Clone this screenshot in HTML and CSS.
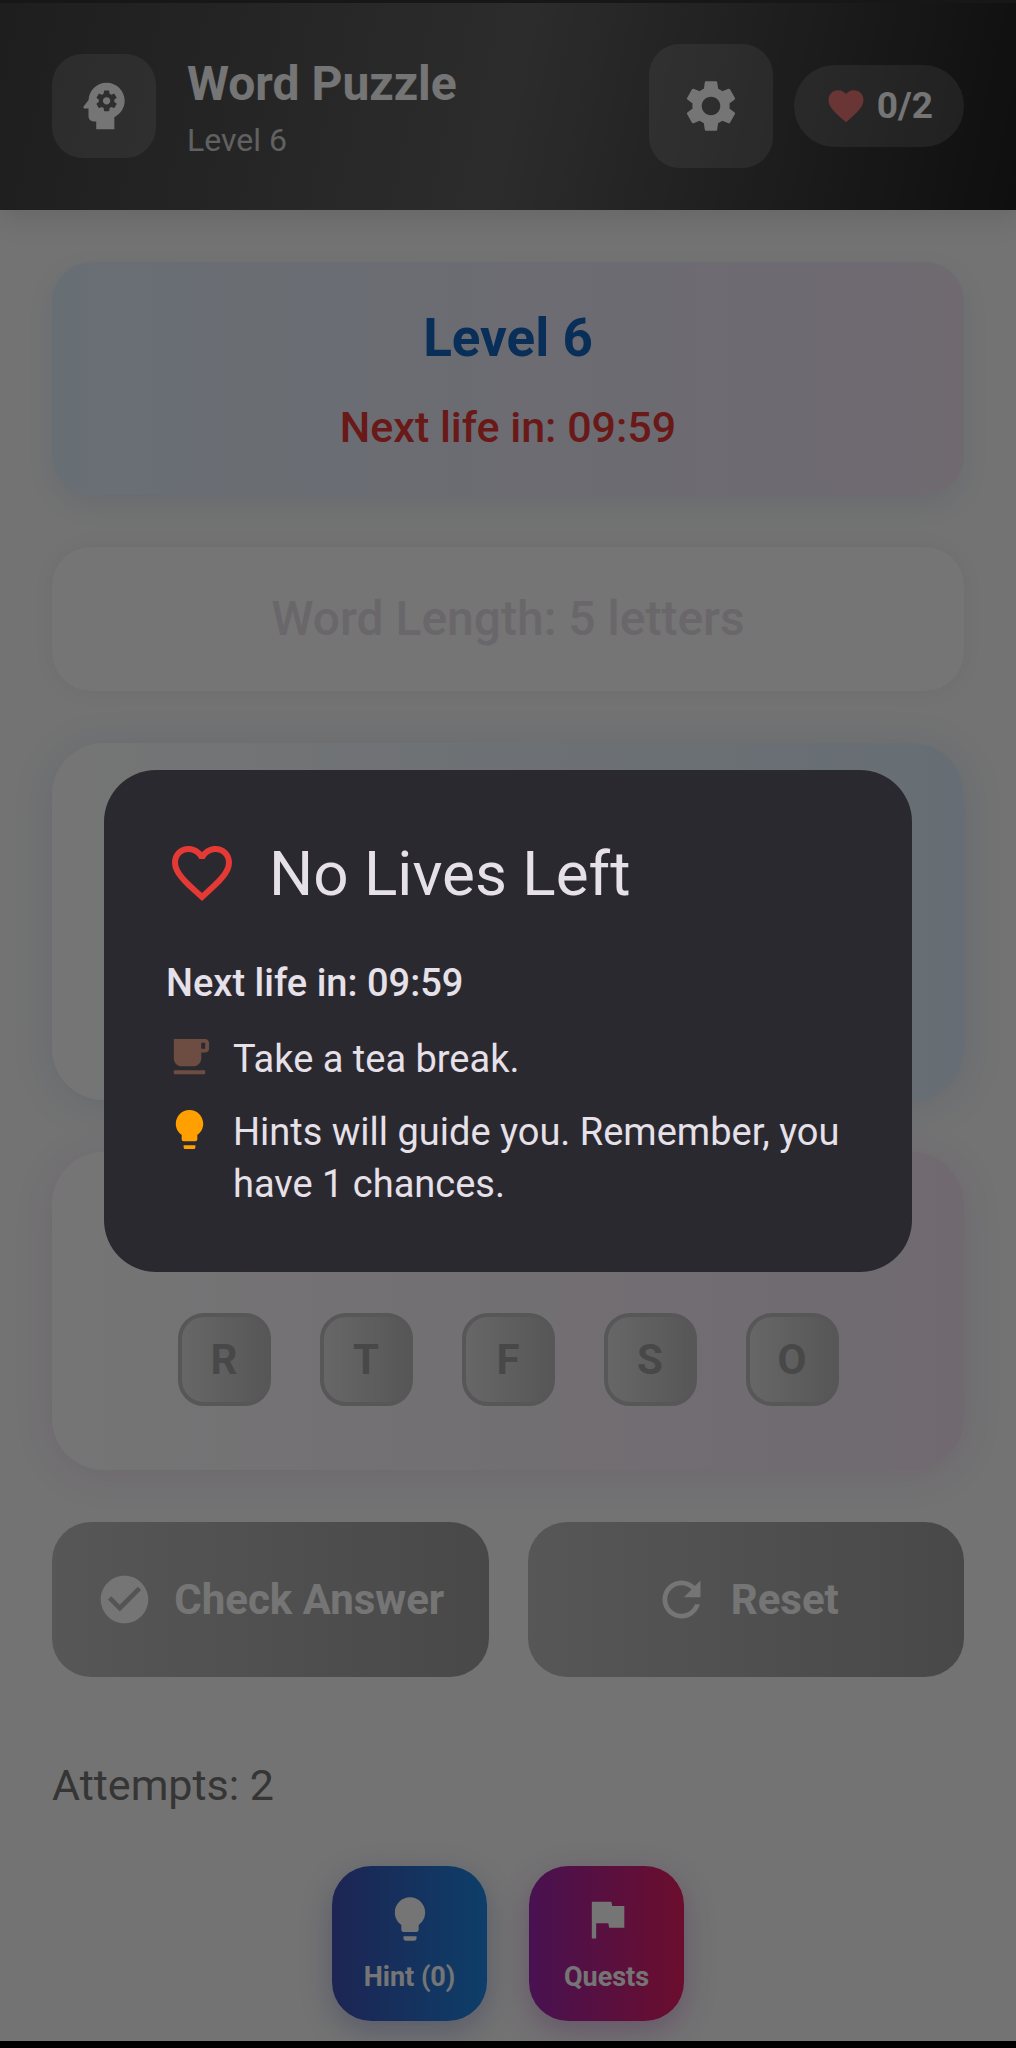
FILE: index.html
```html
<!DOCTYPE html>
<html lang="en">
<head>
  <meta charset="utf-8">
  <title>Word Puzzle</title>
  <link rel="stylesheet" href="styles.css">
</head>
<body>
  <div class="screen">
    <header class="header">
      <div class="logo">
        <svg class="icon-lg" viewBox="0 0 24 24"><path d="M13 8.57c-.79 0-1.43.64-1.43 1.43s.64 1.43 1.43 1.43 1.43-.64 1.43-1.43-.64-1.43-1.43-1.43z"/><path d="M13 3C9.25 3 6.2 5.94 6.02 9.64L4.1 12.2c-.25.33-.01.8.4.8H6v3c0 1.1.9 2 2 2h1v3h7v-4.68c2.36-1.12 4-3.53 4-6.32 0-3.87-3.13-7-7-7zm3 7c0 .13-.01.26-.02.39l.83.66c.08.06.1.16.05.25l-.8 1.39c-.05.09-.16.12-.24.09l-.99-.4c-.21.16-.43.29-.67.39L14 13.83c-.01.1-.1.17-.2.17h-1.6c-.1 0-.18-.07-.2-.17l-.15-1.06c-.25-.1-.47-.23-.68-.39l-.99.4c-.09.03-.2 0-.25-.09l-.8-1.39c-.05-.08-.03-.19.05-.25l.84-.66c-.01-.13-.02-.26-.02-.39s.02-.27.04-.39l-.85-.66c-.08-.06-.1-.16-.05-.26l.8-1.38c.05-.09.15-.12.24-.09l1 .4c.2-.15.43-.29.67-.39l.15-1.06c.02-.1.1-.17.2-.17h1.6c.1 0 .18.07.2.17l.15 1.06c.24.1.46.23.67.39l1-.4c.09-.03.2 0 .24.09l.8 1.38c.05.09.03.2-.05.26l-.85.66c.03.12.04.25.04.39z"/></svg>
      </div>
      <div class="heading">
        <h1>Word Puzzle</h1>
        <p>Level 6</p>
      </div>
      <button class="settings-btn" aria-label="Settings">
        <svg class="icon-lg" viewBox="0 0 24 24"><path d="M19.14 12.94c.04-.3.06-.61.06-.94 0-.32-.02-.64-.07-.94l2.03-1.58c.18-.14.23-.41.12-.61l-1.92-3.32c-.12-.22-.37-.29-.59-.22l-2.39.96c-.5-.38-1.03-.7-1.62-.94l-.36-2.54c-.04-.24-.24-.41-.48-.41h-3.84c-.24 0-.43.17-.47.41l-.36 2.54c-.59.24-1.13.57-1.62.94l-2.39-.96c-.22-.08-.47 0-.59.22L2.74 8.87c-.12.21-.08.47.12.61l2.03 1.58c-.05.3-.09.63-.09.94s.02.64.07.94l-2.03 1.58c-.18.14-.23.41-.12.61l1.92 3.32c.12.22.37.29.59.22l2.39-.96c.5.38 1.03.7 1.62.94l.36 2.54c.05.24.24.41.48.41h3.84c.24 0 .44-.17.47-.41l.36-2.54c.59-.24 1.13-.56 1.62-.94l2.39.96c.22.08.47 0 .59-.22l1.92-3.32c.12-.22.07-.47-.12-.61l-2.01-1.58zM12 15.6c-1.98 0-3.6-1.62-3.6-3.6s1.62-3.6 3.6-3.6 3.6 1.62 3.6 3.6-1.62 3.6-3.6 3.6z"/></svg>
      </button>
      <div class="lives">
        <svg viewBox="0 0 24 24"><path d="M12 21.35l-1.45-1.32C5.4 15.36 2 12.28 2 8.5 2 5.42 4.42 3 7.5 3c1.74 0 3.41.81 4.5 2.09C13.09 3.81 14.76 3 16.5 3 19.58 3 22 5.42 22 8.5c0 3.78-3.4 6.86-8.55 11.54L12 21.35z"/></svg>
        <span>0/2</span>
      </div>
    </header>

    <main class="content">
      <section class="card level-card">
        <h2>Level 6</h2>
        <p>Next life in: 09:59</p>
      </section>

      <section class="card length-card">
        <p>Word Length: 5 letters</p>
      </section>

      <!-- answer slots go here once a game is running -->
      <section class="card answer-card"></section>

      <section class="card letters-card">
        <button class="tile" disabled>R</button>
        <button class="tile" disabled>T</button>
        <button class="tile" disabled>F</button>
        <button class="tile" disabled>S</button>
        <button class="tile" disabled>O</button>
      </section>

      <div class="actions">
        <button class="action-btn" disabled>
          <svg viewBox="0 0 24 24"><path d="M12 2C6.48 2 2 6.48 2 12s4.48 10 10 10 10-4.48 10-10S17.52 2 12 2zm-2 15l-5-5 1.41-1.41L10 14.17l7.59-7.59L19 8l-9 9z"/></svg>
          Check Answer
        </button>
        <button class="action-btn" disabled>
          <svg viewBox="0 0 24 24"><path d="M17.65 6.35C16.2 4.9 14.21 4 12 4c-4.42 0-7.99 3.58-7.99 8s3.57 8 7.99 8c3.73 0 6.84-2.55 7.73-6h-2.08c-.82 2.33-3.04 4-5.65 4-3.31 0-6-2.69-6-6s2.69-6 6-6c1.66 0 3.14.69 4.22 1.78L13 11h7V4l-2.35 2.35z"/></svg>
          Reset
        </button>
      </div>

      <p class="attempts">Attempts: 2</p>

      <div class="shortcuts">
        <button class="shortcut hint-btn">
          <svg viewBox="0 0 24 24"><path d="M9 21c0 .55.45 1 1 1h4c.55 0 1-.45 1-1v-1H9v1zm3-19C8.14 2 5 5.14 5 9c0 2.38 1.19 4.47 3 5.74V17c0 .55.45 1 1 1h6c.55 0 1-.45 1-1v-2.26c1.81-1.27 3-3.36 3-5.74 0-3.86-3.14-7-7-7z"/></svg>
          Hint (0)
        </button>
        <button class="shortcut quests-btn">
          <svg viewBox="0 0 24 24"><path d="M14.4 6L14 4H5v17h2v-7h5.6l.4 2h7V6z"/></svg>
          Quests
        </button>
      </div>
    </main>

    <div class="overlay">
      <div class="dialog" role="dialog" aria-modal="true" aria-labelledby="dialog-title">
        <div class="dialog-title">
          <svg viewBox="0 0 24 24"><path d="M16.5 3c-1.74 0-3.41.81-4.5 2.09C10.91 3.81 9.24 3 7.5 3 4.42 3 2 5.42 2 8.5c0 3.78 3.4 6.86 8.55 11.54L12 21.35l1.45-1.32C18.6 15.36 22 12.28 22 8.5 22 5.42 19.58 3 16.5 3zm-4.4 15.55l-.1.1-.1-.1C7.14 14.24 4 11.39 4 8.5 4 6.5 5.5 5 7.5 5c1.54 0 3.04.99 3.57 2.36h1.87C13.46 5.99 14.96 5 16.5 5c2 0 3.5 1.5 3.5 3.5 0 2.89-3.14 5.74-7.9 10.05z"/></svg>
          <h2 id="dialog-title">No Lives Left</h2>
        </div>
        <p class="dialog-timer">Next life in: 09:59</p>
        <ul class="tips">
          <li>
            <svg class="tea" viewBox="0 0 24 24"><path d="M20 3H4v10c0 2.21 1.79 4 4 4h6c2.21 0 4-1.79 4-4v-3h2c1.11 0 2-.89 2-2V5c0-1.11-.89-2-2-2zm0 5h-2V5h2v3zM4 19h16v2H4z"/></svg>
            <span>Take a tea break.</span>
          </li>
          <li>
            <svg class="bulb" viewBox="0 0 24 24"><path d="M9 21c0 .55.45 1 1 1h4c.55 0 1-.45 1-1v-1H9v1zm3-19C8.14 2 5 5.14 5 9c0 2.38 1.19 4.47 3 5.74V17c0 .55.45 1 1 1h6c.55 0 1-.45 1-1v-2.26c1.81-1.27 3-3.36 3-5.74 0-3.86-3.14-7-7-7z"/></svg>
            <span>Hints will guide you. Remember, you have 1 chances.</span>
          </li>
        </ul>
      </div>
    </div>
  </div>
</body>
</html>
```
FILE: styles.css
```css
* {
  box-sizing: border-box;
}

body {
  margin: 0;
  background-color: #000;
  font-family: Roboto, "Liberation Sans", sans-serif;
}

h1, h2, p, ul {
  margin: 0;
  padding: 0;
}

button {
  border: none;
  padding: 0;
  font-family: inherit;
  cursor: pointer;
}

button:disabled {
  cursor: default;
}

svg {
  display: block;
  flex-shrink: 0;
  fill: currentColor;
}

.screen {
  position: relative;
  min-height: calc(100vh - 8px);
  margin-bottom: 8px;
  background-color: #fafafa;
  overflow: hidden;
}

/* header */
.header {
  display: flex;
  align-items: center;
  padding: 41px 52px 42px;
  border-top: 3px solid #333;
  background: linear-gradient(102deg, #424242, #616161 50%, #212121);
  box-shadow: 0 10px 26px rgba(0, 0, 0, 0.1);
  color: white;
}

.logo {
  padding: 21px;
  border-radius: 31px;
  background-color: rgba(255, 255, 255, 0.15);
}

.icon-lg {
  width: 62px;
  height: 62px;
}

.heading {
  flex: 1;
  margin-left: 31px;
  padding-top: 6px;
}

.heading h1 {
  font-size: 48px;
  line-height: 62px;
  font-weight: bold;
}

.heading p {
  font-size: 32px;
  line-height: 50px;
  color: rgba(255, 255, 255, 0.75);
}

.settings-btn {
  padding: 31px;
  border-radius: 31px;
  background-color: rgba(255, 255, 255, 0.15);
  color: white;
}

.lives {
  display: flex;
  align-items: center;
  gap: 10px;
  margin-left: 21px;
  padding: 15px 31px;
  border-radius: 42px;
  background-color: rgba(255, 255, 255, 0.15);
  font-size: 37px;
  line-height: 52px;
  font-weight: bold;
}

.lives svg {
  width: 42px;
  height: 42px;
  color: #e57373;
}

/* game */
.content {
  display: flex;
  flex-direction: column;
  padding: 52px 52px 20px;
}

.card {
  margin-bottom: 52px;
  border-radius: 39px;
  text-align: center;
}

.level-card {
  padding: 42px 42px 39px;
  background: linear-gradient(90deg, #e3f2fd, #f3e5f5);
  box-shadow: 0 10px 26px rgba(33, 100, 200, 0.1);
}

.level-card h2 {
  margin-bottom: 26px;
  font-size: 53px;
  line-height: 68px;
  color: #1565c0;
}

.level-card p {
  font-size: 43px;
  line-height: 58px;
  font-weight: 500;
  color: #e53935;
}

.length-card {
  padding: 42px;
  background-color: white;
  box-shadow: 0 0 21px rgba(0, 0, 0, 0.05);
}

.length-card p {
  font-size: 48px;
  line-height: 60px;
  font-weight: 500;
  color: #e6e0e9;
}

.answer-card {
  min-height: 357px;
  border-radius: 52px;
  background: linear-gradient(90deg, white, #deeefc);
  box-shadow: 0 5px 39px rgba(33, 100, 200, 0.15);
}

.letters-card {
  display: flex;
  justify-content: center;
  align-items: flex-end;
  gap: 49px;
  min-height: 318px;
  padding: 64px;
  border-radius: 52px;
  background: linear-gradient(90deg, white, #f3e5f5);
  box-shadow: 0 5px 39px rgba(156, 39, 176, 0.12);
}

.tile {
  width: 93px;
  height: 93px;
  border: 4px solid #bdbdbd;
  border-radius: 26px;
  background: linear-gradient(90deg, #e0e0e0, #bdbdbd);
  color: #9e9e9e;
  font-size: 42px;
  font-weight: bold;
}

.actions {
  display: grid;
  grid-template-columns: 1fr 1fr;
  gap: 39px;
}

.action-btn {
  display: flex;
  justify-content: center;
  align-items: center;
  gap: 21px;
  height: 155px;
  border-radius: 39px;
  background: linear-gradient(90deg, #bdbdbd, #9e9e9e);
  color: white;
  font-size: 42px;
  font-weight: bold;
}

.action-btn svg {
  width: 57px;
  height: 57px;
}

.attempts {
  margin: 78px 0 51px;
  font-size: 43px;
  line-height: 60px;
  color: #757575;
}

.shortcuts {
  display: flex;
  justify-content: center;
  gap: 42px;
}

.shortcut {
  display: flex;
  flex-direction: column;
  justify-content: center;
  align-items: center;
  gap: 14px;
  width: 155px;
  height: 155px;
  border-radius: 39px;
  color: white;
  font-size: 27px;
  line-height: 36px;
  font-weight: bold;
}

.shortcut svg {
  width: 52px;
  height: 52px;
}

.hint-btn {
  background: linear-gradient(90deg, #3f51b5, #1e88e5);
  box-shadow: 0 10px 31px rgba(63, 81, 181, 0.3);
}

.quests-btn {
  background: linear-gradient(90deg, #9c27b0, #e91e63);
  box-shadow: 0 10px 31px rgba(156, 39, 176, 0.3);
}

/* no lives dialog */
.overlay {
  position: absolute;
  inset: 0;
  display: flex;
  justify-content: center;
  align-items: center;
  padding: 0 104px;
  background-color: rgba(0, 0, 0, 0.54);
}

.dialog {
  width: 100%;
  padding: 62px;
  border-radius: 52px;
  background-color: #2b2930;
  color: #e6e0e9;
}

.dialog-title {
  display: flex;
  align-items: center;
  gap: 31px;
  margin-bottom: 42px;
}

.dialog-title svg {
  width: 72px;
  height: 72px;
  color: #e53935;
}

.dialog-title h2 {
  font-size: 62px;
  line-height: 83px;
  font-weight: normal;
}

.dialog-timer {
  margin-bottom: 24px;
  font-size: 38px;
  line-height: 52px;
  font-weight: 500;
}

.tips {
  display: flex;
  flex-direction: column;
  gap: 21px;
  list-style: none;
  font-size: 38px;
  line-height: 52px;
}

.tips li {
  display: flex;
  align-items: flex-start;
  gap: 20px;
}

.tips svg {
  width: 47px;
  height: 47px;
}

.tea {
  color: #6d4c41;
}

.bulb {
  color: #ffa000;
}
```
